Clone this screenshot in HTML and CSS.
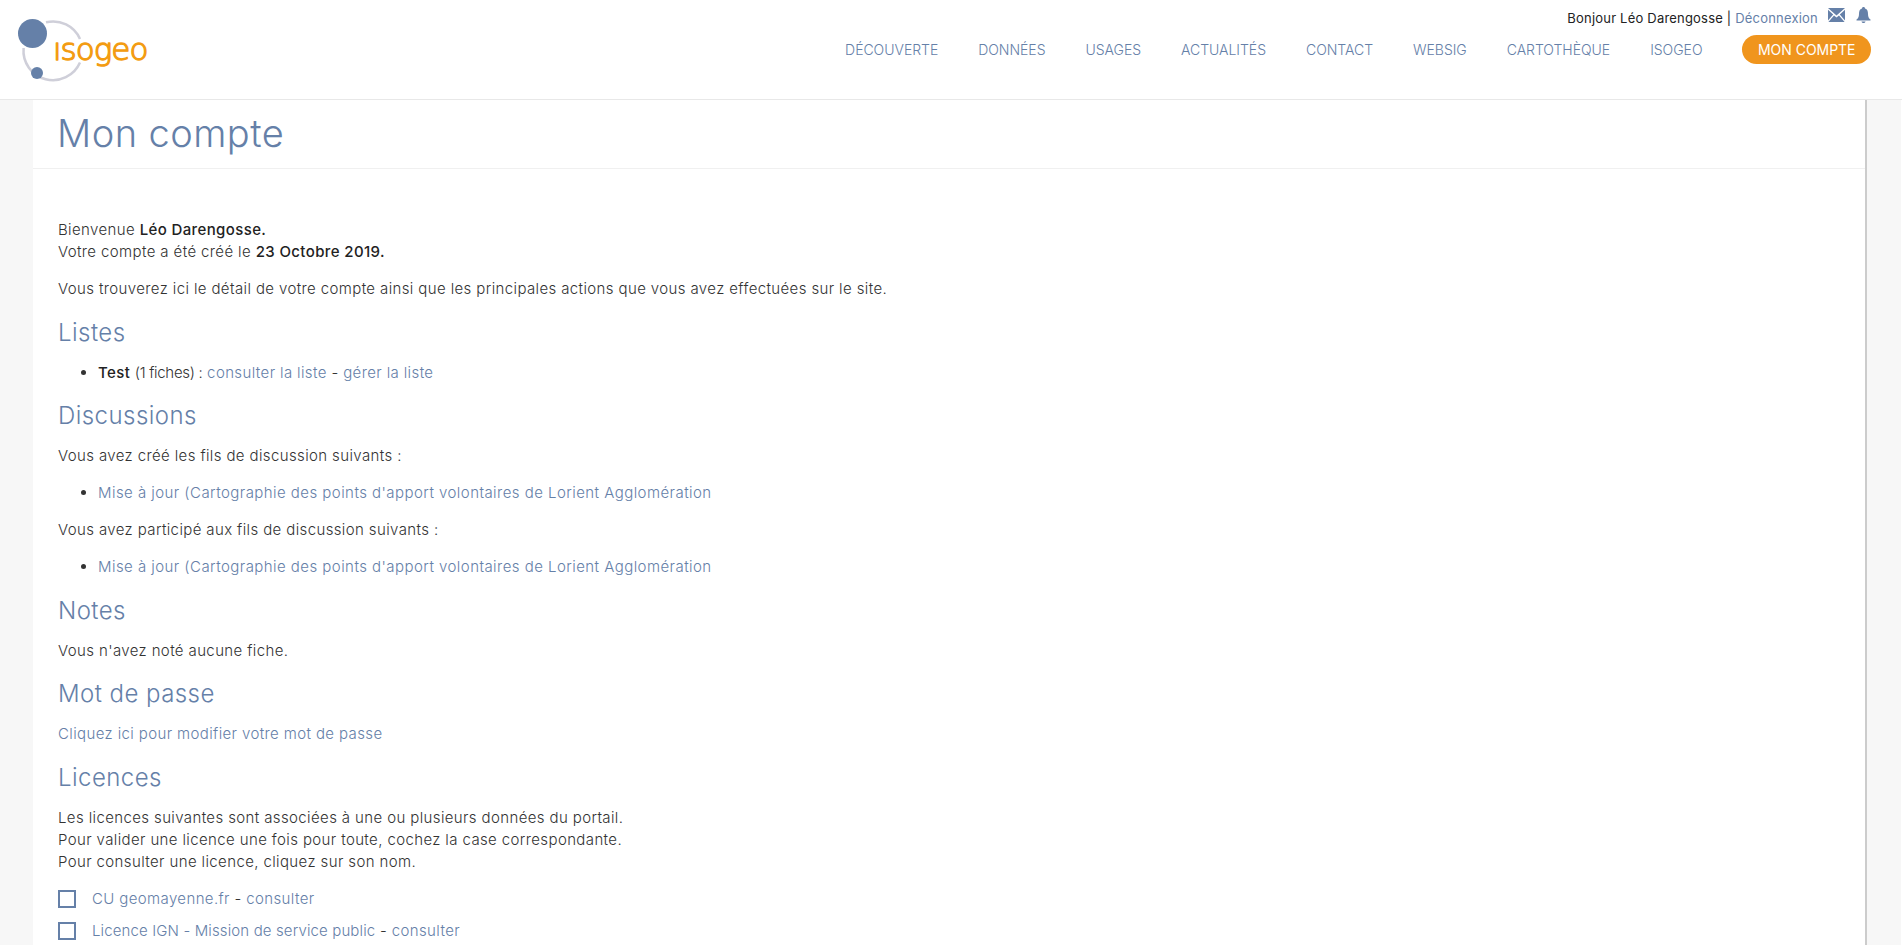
FILE: index.html
```html
<!DOCTYPE html>
<html lang="fr">
<head>
<meta charset="utf-8">
<title>Mon compte</title>
<link rel="stylesheet" href="styles.css">
</head>
<body>
<header class="site-header">
  <a class="logo" href="#">
    <svg width="160" height="90" viewBox="0 0 160 90">
      <path class="orbit" d="M46 22.300 A29.500 29.500 0 0 1 80 39"/>
      <path class="orbit" d="M23.600 48 A29.500 29.500 0 0 0 80 62.500"/>
      <circle class="planet" cx="32.500" cy="33.500" r="14.500"/>
      <circle class="planet" cx="37" cy="73" r="6"/>
      <text class="logo-text" x="53" y="60">ısogeo</text>
    </svg>
  </a>
  <div class="header-right">
    <div class="userbar">
      <span>Bonjour Léo Darengosse | <a href="#">Déconnexion</a></span>
      <svg class="ico-mail" width="17" height="14" viewBox="0 0 17 14"><path d="M0 0H17L8.500 7.500ZM0 1.800L5.200 6.500 0 12.500ZM17 1.800L11.800 6.500 17 12.500ZM6 7.500L8.500 9.500 11 7.500 16.600 14H.4Z"/></svg>
      <svg class="ico-bell" width="15" height="16" viewBox="0 0 15 16"><path d="M7.500 0C8.500 0 9 .7 9 1.500 11.500 2.300 12 4.500 12 7 12 10 13 11.500 14.500 12.500V13.500H.5V12.500C2 11.500 3 10 3 7 3 4.500 3.500 2.300 6 1.500 6 .7 6.500 0 7.500 0ZM5.500 14.500H9.500C9.500 15.400 8.600 16 7.500 16S5.500 15.400 5.500 14.500Z"/></svg>
    </div>
    <nav class="main-nav">
      <a href="#">DÉCOUVERTE</a>
      <a href="#">DONNÉES</a>
      <a href="#">USAGES</a>
      <a href="#">ACTUALITÉS</a>
      <a href="#">CONTACT</a>
      <a href="#">WEBSIG</a>
      <a href="#">CARTOTHÈQUE</a>
      <a href="#">ISOGEO</a>
      <a class="btn-account" href="#">MON COMPTE</a>
    </nav>
  </div>
</header>
<div class="page">
  <main class="panel">
    <div class="panel-head"><h1>Mon compte</h1></div>
    <div class="panel-body">
      <p>Bienvenue <strong>Léo Darengosse.</strong><br>Votre compte a été créé le <strong>23 Octobre 2019.</strong></p>
      <p>Vous trouverez ici le détail de votre compte ainsi que les principales actions que vous avez effectuées sur le site.</p>
      <h2>Listes</h2>
      <ul><li><strong>Test</strong> <span class="count">(1 fiches) :</span> <a href="#">consulter la liste</a> - <a href="#">gérer la liste</a></li></ul>
      <h2>Discussions</h2>
      <p>Vous avez créé les fils de discussion suivants :</p>
      <ul><li><a class="thread" href="#">Mise à jour (Cartographie des points d'apport volontaires de Lorient Agglomération</a></li></ul>
      <p>Vous avez participé aux fils de discussion suivants :</p>
      <ul><li><a class="thread" href="#">Mise à jour (Cartographie des points d'apport volontaires de Lorient Agglomération</a></li></ul>
      <h2>Notes</h2>
      <p>Vous n'avez noté aucune fiche.</p>
      <h2>Mot de passe</h2>
      <p><a href="#">Cliquez ici pour modifier votre mot de passe</a></p>
      <h2>Licences</h2>
      <p>Les licences suivantes sont associées à une ou plusieurs données du portail.<br>Pour valider une licence une fois pour toute, cochez la case correspondante.<br>Pour consulter une licence, cliquez sur son nom.</p>
      <div class="licences">
        <div class="licence"><span class="check"></span><span><a href="#">CU geomayenne.fr</a> - <a href="#">consulter</a></span></div>
        <div class="licence"><span class="check"></span><span><a class="licence-name" href="#">Licence IGN - Mission de service public</a> - <a href="#">consulter</a></span></div>
      </div>
    </div>
  </main>
</div>
</body>
</html>
```
FILE: styles.css
```css
* { box-sizing: border-box; }
html, body { margin: 0; height: 100%; overflow: hidden; }
body {
  background: #fff;
  color: #333;
  font-family: Inter, "Open Sans", sans-serif;
  font-weight: 300;
  font-size: 15px;
  letter-spacing: .38px;
  line-height: 22px;
}
a { color: #6580a8; text-decoration: none; }
strong { font-weight: 500; color: #222; }

.site-header {
  height: 100px;
  background: #fff;
  border-bottom: 1px solid #e8e8e8;
  display: flex;
  justify-content: space-between;
}
.logo { display: block; height: 90px; }
.orbit { fill: none; stroke: #cfcfd9; stroke-width: 2.500; }
.planet { fill: #6580a8; }
.logo-text { fill: #f39c12; font-family: "DejaVu Sans", sans-serif; font-size: 31px; letter-spacing: -1px; stroke: #f39c12; stroke-width: 1.300; stroke-linejoin: round; }

.header-right { display: flex; flex-direction: column; align-items: flex-end; padding: 7px 31px 0 0; }
.userbar { display: flex; align-items: flex-start; height: 28px; font-size: 13px; font-weight: 400; letter-spacing: .2px; color: #222; line-height: 20px; padding-top: 1px; }
.userbar > span { margin-right: 10px; }
.ico-mail { fill: #6580a8; margin-right: 11px; }
.ico-bell { fill: #6580a8; margin-top: -1px; }
.main-nav { display: flex; align-items: center; gap: 40px; font-size: 14px; letter-spacing: -.03px; color: #7389ab; }
.main-nav a { line-height: 29px; }
.main-nav .btn-account { background: #f0951d; color: #fff; border-radius: 15px; padding: 0 15.500px; font-weight: 400; }

.page { padding: 0 34px 0 33px; margin-right: 1px; background: #f7f7f7; }
.panel { background: #fff; border-right: 2px solid #ccc; height: 850px; }
.panel-head { height: 69px; border-bottom: 1px solid #f0f0f0; padding: 11px 24px 0; }
h1 { margin: 0; font-size: 38px; line-height: 44px; font-weight: 300; letter-spacing: .45px; color: #6580a8; }
.panel-body { padding: 50px 25px 0; }
p { margin: 0 0 15px; }
h2 { margin: 0; font-size: 24px; line-height: 30px; font-weight: 300; letter-spacing: .45px; color: #6580a8; padding: 2.500px 0 14px; }
ul { margin: 0 0 15px; padding: 0 0 0 40px; }
.count { letter-spacing: -.3px; }
.thread { letter-spacing: .45px; }
.licence-name { letter-spacing: .13px; }
.licences { display: flex; flex-direction: column; gap: 14px; margin-top: -13px; padding-top: 15px; }
.licence { display: flex; align-items: center; height: 18px; }
.check { width: 18px; height: 18px; border: 2px solid #6580a8; margin-right: 16px; }
```
